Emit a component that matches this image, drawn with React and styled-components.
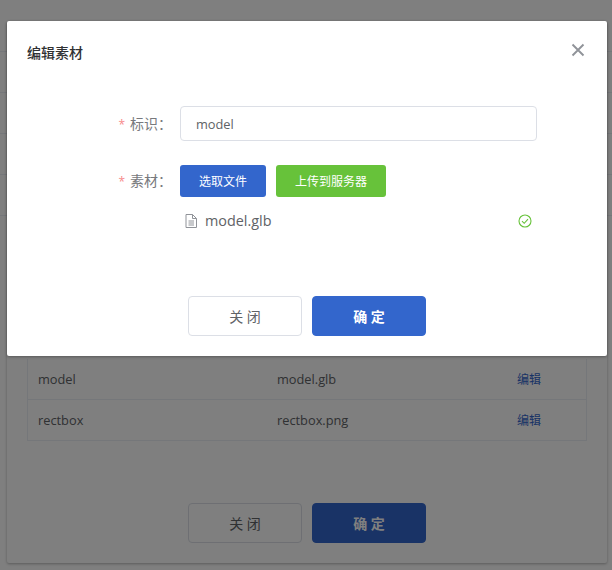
import React from "react";
import styled, { createGlobalStyle } from "styled-components";

const GlobalStyle = createGlobalStyle`
  html, body {
    margin: 0;
    padding: 0;
    background: #fff;
  }
  * {
    box-sizing: border-box;
  }
`;

const FONT = `"Open Sans", "Noto Sans CJK SC", sans-serif`;

const Screen = styled.div`
  position: relative;
  width: 612px;
  height: 570px;
  overflow: hidden;
  font-family: ${FONT};
  font-size: 14px;
  color: #606266;
`;

const PageRows = styled.div`
  padding-top: 11px;
`;

const PageRow = styled.div`
  height: 41px;
  border-bottom: 1px solid #ebeef5;
`;

const Overlay = styled.div`
  position: absolute;
  inset: 0;
  z-index: 2;
  background: rgba(0, 0, 0, 0.5);
`;

const Dialog = styled.div`
  position: absolute;
  left: 7px;
  top: 21px;
  width: 600px;
  height: ${(p) => p.$height}px;
  z-index: ${(p) => p.$z};
  display: flex;
  flex-direction: column;
  background: #fff;
  border-radius: 2px;
  box-shadow: 0 1px 3px rgba(0, 0, 0, 0.3);
`;

const BaseBody = styled.div`
  flex: 1;
  display: flex;
  flex-direction: column;
  justify-content: flex-end;
  padding: 0 20px 20px;
`;

const Table = styled.div`
  border: 1px solid #ebeef5;
  border-top: 0;
  margin-bottom: 62px;
`;

const TableRow = styled.div`
  display: grid;
  grid-template-columns: 239px 240px 1fr;
  align-items: center;
  height: ${(p) => (p.$last ? 40 : 41)}px;
  padding-left: 10px;
  font-size: 12.8px;
  border-bottom: ${(p) => (p.$last ? "0" : "1px solid #ebeef5")};
`;

const EditLink = styled.a`
  color: #3366cc;
  font-size: 12px;
`;

const Header = styled.div`
  display: flex;
  align-items: flex-start;
  justify-content: space-between;
  padding: 22px 22px 0 20px;
`;

const Title = styled.div`
  font-size: 14px;
  line-height: 20px;
  font-weight: 500;
  color: #303133;
`;

const CloseIcon = styled.svg`
  display: block;
  width: 14px;
  height: 14px;
`;

const Form = styled.div`
  display: flex;
  flex-direction: column;
  gap: 24px;
  padding: 43px 70px 0 0;
`;

const FormRow = styled.div`
  display: grid;
  grid-template-columns: 165px 1fr;
  column-gap: 8px;
`;

const Label = styled.label`
  display: block;
  height: ${(p) => p.$line}px;
  text-align: right;
  font-size: 14px;
  line-height: ${(p) => p.$line}px;
  color: #77797d;
`;

const Star = styled.span`
  color: #f78989;
  font-size: 12px;
  margin-right: 5px;
`;

const TextBox = styled.input`
  width: 100%;
  height: 35px;
  padding: 0 15px;
  border: 1px solid #dcdfe6;
  border-radius: 4px;
  outline: 0;
  font-family: ${FONT};
  font-size: 12.8px;
  color: #606266;
`;

const UploadButtons = styled.div`
  display: flex;
  gap: 10px;
`;

const SmallButton = styled.button`
  width: ${(p) => p.$width}px;
  height: 32px;
  padding: 0;
  border: 0;
  border-radius: 3px;
  background: ${(p) => p.$color};
  color: #fff;
  font-family: ${FONT};
  font-size: 12px;
`;

const FileRow = styled.div`
  display: flex;
  align-items: center;
  height: 25px;
  margin-top: 11px;
  padding: 0 5px 0 4px;
  font-size: 14.4px;
`;

const FileIcon = styled.svg`
  width: 14px;
  height: 16px;
  flex: none;
  margin-right: 7px;
`;

const FileName = styled.span`
  flex: 1;
`;

const CheckIcon = styled.svg`
  width: 14px;
  height: 14px;
  flex: none;
`;

const Footer = styled.div`
  display: flex;
  justify-content: center;
  gap: 10px;
  margin-top: auto;
  padding: 0 0 20px;
`;

const BaseFooter = styled(Footer)`
  padding: 0;
  margin: 0;
`;

const FooterButton = styled.button`
  width: 114px;
  height: 40px;
  padding: 0;
  border: 1px solid ${(p) => (p.$primary ? "#3366cc" : "#dcdfe6")};
  border-radius: 4px;
  background: ${(p) => (p.$primary ? "#3366cc" : "#fff")};
  color: ${(p) => (p.$primary ? "#fff" : "#606266")};
  font-family: ${FONT};
  font-size: 14px;
  font-weight: ${(p) => (p.$primary ? 700 : 400)};
`;

const rows = [
  { name: "model", file: "model.glb" },
  { name: "rectbox", file: "rectbox.png" },
];

function DialogButtons({ as: Wrap = Footer }) {
  return (
    <Wrap>
      <FooterButton>关 闭</FooterButton>
      <FooterButton $primary>确 定</FooterButton>
    </Wrap>
  );
}

export default function App() {
  return (
    <Screen>
      <GlobalStyle />
      <PageRows>
        {[0, 1, 2, 3, 4].map((i) => (
          <PageRow key={i} />
        ))}
      </PageRows>

      <Dialog $height={542} $z={1}>
        <BaseBody>
          <Table>
            {rows.map((row, i) => (
              <TableRow key={row.name} $last={i === rows.length - 1}>
                <span>{row.name}</span>
                <span>{row.file}</span>
                <EditLink>编辑</EditLink>
              </TableRow>
            ))}
          </Table>
          <DialogButtons as={BaseFooter} />
        </BaseBody>
      </Dialog>

      <Overlay />

      <Dialog $height={335} $z={3}>
        <Header>
          <Title>编辑素材</Title>
          <CloseIcon viewBox="0 0 14 14">
            <path d="M1.5 1.5 12.5 12.5M12.5 1.5 1.5 12.5" stroke="#909399" strokeWidth="1.9" fill="none" />
          </CloseIcon>
        </Header>

        <Form>
          <FormRow>
            <Label $line={35}>
              <Star>*</Star>标识：
            </Label>
            <TextBox defaultValue="model" />
          </FormRow>
          <FormRow>
            <Label $line={32}>
              <Star>*</Star>素材：
            </Label>
            <div>
              <UploadButtons>
                <SmallButton $width={86} $color="#3366cc">选取文件</SmallButton>
                <SmallButton $width={110} $color="#67c23a">上传到服务器</SmallButton>
              </UploadButtons>
              <FileRow>
                <FileIcon viewBox="0 0 14 16" fill="none" stroke="#909399" strokeWidth="1">
                  <path d="M2 1.5h6.5L12.5 5.5V14.5H2Z" />
                  <path d="M8.5 1.5V5.5H12.5M4.5 8h5.5M4.5 10h5.5M4.5 12h5.5" />
                </FileIcon>
                <FileName>model.glb</FileName>
                <CheckIcon viewBox="0 0 14 14" fill="none" stroke="#67c23a" strokeWidth="1.1">
                  <circle cx="7" cy="7" r="6" />
                  <path d="M4 7.2 6.2 9.3 10 5.2" />
                </CheckIcon>
              </FileRow>
            </div>
          </FormRow>
        </Form>

        <DialogButtons />
      </Dialog>
    </Screen>
  );
}
